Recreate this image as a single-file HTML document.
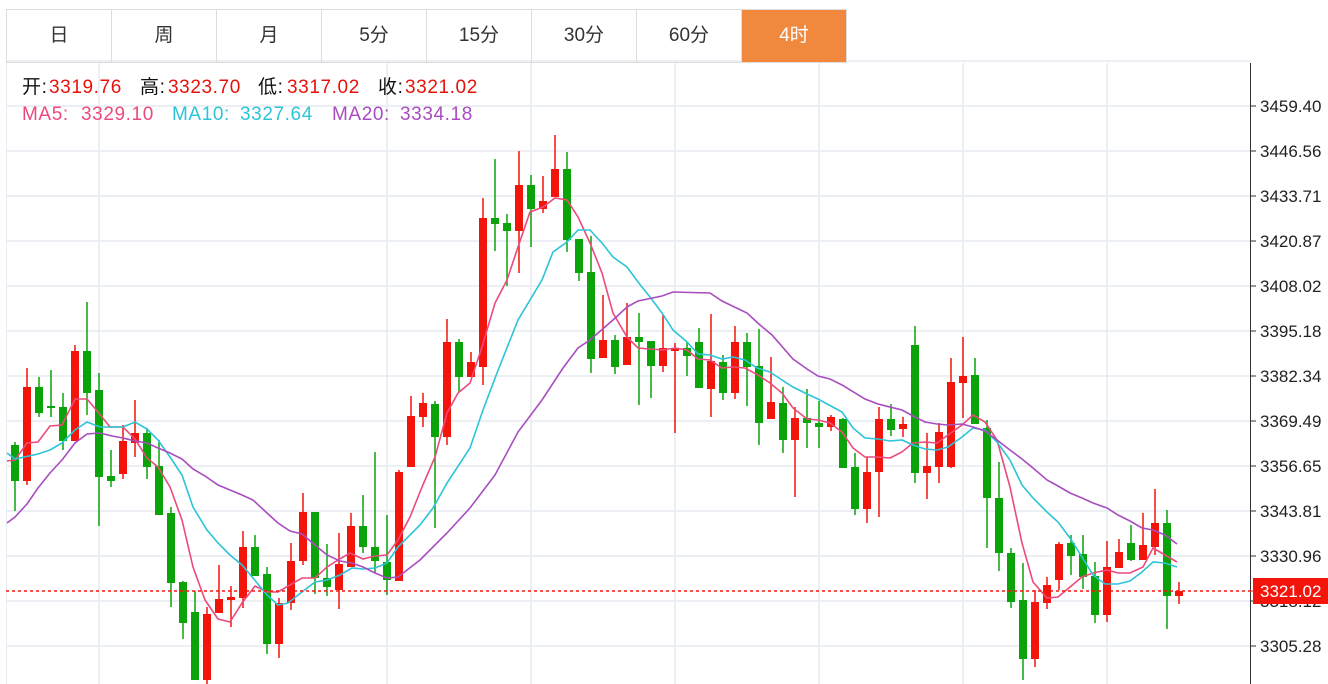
<!DOCTYPE html>
<html><head><meta charset="utf-8">
<style>
body{margin:0;width:1328px;height:684px;overflow:hidden;background:#fff;font-family:"Liberation Sans","Noto Sans CJK SC",sans-serif;}
.tabs{position:absolute;left:6px;top:9px;height:54px;display:flex;border:1px solid #ddd;border-right:none;box-sizing:border-box}
.tabs div{width:105px;height:52px;line-height:52px;text-align:center;font-size:19px;color:#333;border-right:1px solid #ddd;box-sizing:border-box}
.tabs div.on{background:#f0883e;color:#fff}
.t{position:absolute;font-size:19px;line-height:22px;height:22px;white-space:nowrap;letter-spacing:0.6px}
.r{color:#e8110a}
svg{position:absolute;left:0;top:0}
</style></head><body>
<svg id="s" width="1328" height="684"></svg>
<div class="tabs"><div>日</div><div>周</div><div>月</div><div>5分</div><div>15分</div><div>30分</div><div>60分</div><div class="on">4时</div></div>
<div class="t" style="left:22px;top:77px;color:#111">开:</div><div class="t r" style="left:49px;top:77px">3319.76</div>
<div class="t" style="left:140px;top:77px;color:#111">高:</div><div class="t r" style="left:168px;top:77px">3323.70</div>
<div class="t" style="left:258px;top:77px;color:#111">低:</div><div class="t r" style="left:287px;top:77px">3317.02</div>
<div class="t" style="left:378px;top:77px;color:#111">收:</div><div class="t r" style="left:405px;top:77px">3321.02</div>
<div class="t" style="left:22px;top:104px;color:#ec4a7d">MA5:</div><div class="t" style="left:81px;top:104px;color:#ec4a7d">3329.10</div>
<div class="t" style="left:172px;top:104px;color:#2cc4d8">MA10:</div><div class="t" style="left:240px;top:104px;color:#2cc4d8">3327.64</div>
<div class="t" style="left:332px;top:104px;color:#a94cc0">MA20:</div><div class="t" style="left:400px;top:104px;color:#a94cc0">3334.18</div>
<script>
var h='';
for(var k=-1;k<=12;k++){var y=106+45*k;h+='<line x1="6" x2="1250" y1="'+y+'" y2="'+y+'" stroke="#e6ecf2" stroke-width="1.5"/>';}
[99,387,531,675,819,963,1107].forEach(function(x){h+='<line x1="'+x+'" x2="'+x+'" y1="63" y2="684" stroke="#e6ecf2" stroke-width="1.5"/>';});
h+='<line x1="6.5" x2="6.5" y1="63" y2="684" stroke="#e6ecf2"/>';
var C=[
['g',445,481,442,511],['r',387,481,368,485],['g',387,413,377,417],['g',406,408,370,417],['g',407,441,393,450],['r',351,441,345,441],['g',351,393,302,415],['g',390,477,373,526],['g',476,481,450,487],['r',441,474,425,479],['r',433,443,400,457],['g',433,467,428,479],['g',466,515,440,515],['g',513,583,507,607],['g',582,623,581,639],['g',612,680,591,680],['r',614,680,607,684],['r',599,613,565,613],['r',597,600,586,627],['r',547,598,531,608],['g',547,576,535,576],['g',574,644,567,654],['r',603,644,598,658],['r',561,603,543,610],['r',512,561,493,565],['g',512,578,512,594],['g',578,587,544,596],['r',564,590,533,609],['r',526,567,513,567],['g',526,547,495,553],['g',547,561,452,573],['g',562,580,515,595],['r',472,581,470,581],['r',416,467,396,467],
['r',403,417,393,427],['g',404,437,401,528],['r',342,437,319,445],['g',342,377,339,392],['r',362,377,352,377],['r',218,367,198,385],['g',218,224,159,251],['g',223,231,214,286],['r',185,231,151,273],['g',185,209,175,247],['r',201,209,176,213],['r',169,197,135,197],['g',169,240,152,252],['g',239,273,239,281],['g',272,359,236,373],['r',340,358,295,358],['g',340,367,335,374],['r',337,365,303,365],['g',337,342,313,405],['g',341,366,341,398],['r',348,366,315,372],['r',348,351,343,433],['g',348,356,342,376],['g',342,388,328,388],['r',361,389,314,417],['g',362,393,355,400],['r',342,393,326,399],['g',342,367,333,406],['g',366,423,329,445],['r',402,419,357,419],['g',403,440,387,453],['r',418,440,407,497],['g',418,423,389,448],
['g',423,427,401,448],['r',417,427,415,431],['g',419,468,418,468],['g',467,509,453,515],['r',472,509,457,523],['r',419,472,407,517],['g',419,430,404,436],['r',424,429,417,437],['g',345,473,326,483],['r',466,473,433,499],['r',432,467,423,483],['r',382,467,358,468],['r',376,383,337,418],['g',375,424,358,424],['g',428,498,420,548],['g',498,553,462,571],['g',553,602,548,608],['g',600,659,563,680],['r',602,659,590,667],['r',585,603,577,609],['r',544,580,542,590],['g',543,556,535,575],['g',554,577,535,589],['g',576,615,562,623],['r',567,615,541,622],['r',552,568,539,568],['g',543,560,525,561],['r',545,560,513,560],['r',523,547,489,555],['g',523,596,510,629],['r',591,596,582,604]];
C.forEach(function(c,i){var x=15+12*i,col=c[0]=='g'?'#0aa30a':'#f3140b';
h+='<line x1="'+x+'" x2="'+x+'" y1="'+c[3]+'" y2="'+c[4]+'" stroke="'+col+'" stroke-width="1.5"/>';
var bh=Math.max(2,c[2]-c[1]);h+='<rect x="'+(x-4)+'" y="'+c[1]+'" width="8" height="'+bh+'" fill="'+col+'"/>';});
function pl(p,col){h+='<polyline fill="none" stroke="'+col+'" stroke-width="1.6" points="'+p+'"/>';}
pl('7,461 15,460 27,443 38,442 50,426 62,425 75,399 87,399 98,412 110,427 123,427 135,439 147,458 158,467 170,487 182,520 193,567 205,600 218,619 230,622 242,603 255,586 267,592 278,592 290,585 302,578 315,578 327,567 338,560 350,553 363,559 375,556 387,555 398,540 410,517 422,487 435,457 447,413 458,393 470,383 482,347 495,303 507,280 518,247 530,212 543,207 555,198 567,200 578,217 590,243 602,273 613,313 627,337 638,348 650,349 663,350 675,348 687,350 698,359 710,360 722,368 733,367 745,368 758,375 770,383 782,393 793,408 807,419 818,420 830,423 842,432 853,448 865,457 878,457 890,458 902,452 913,443 925,442 937,443 948,435 962,425 973,415 985,422 997,440 1010,487 1022,543 1033,582 1047,598 1058,597 1070,587 1082,577 1093,573 1107,570 1118,573 1130,573 1143,567 1153,548 1165,555 1177,562','#ec4a7d');
pl('7,453 15,459 38,454 50,450 62,443 75,430 87,422 100,427 112,427 123,427 135,422 147,429 158,440 170,457 182,475 193,507 207,530 218,543 230,555 242,565 253,578 267,595 278,605 288,603 302,592 315,582 327,580 340,575 352,568 363,569 375,568 387,563 398,547 420,525 433,508 447,483 470,448 483,410 497,373 518,320 542,280 553,252 567,242 578,230 590,230 602,243 613,257 627,267 638,282 650,297 662,313 673,330 687,342 698,354 710,355 722,359 733,357 745,360 757,368 770,372 782,380 793,387 807,394 818,399 842,412 853,428 865,438 878,439 890,441 902,440 913,445 925,449 937,450 948,447 962,437 973,428 985,430 997,442 1010,460 1022,485 1033,498 1047,512 1058,522 1070,538 1082,557 1093,575 1105,584 1118,584 1130,581 1142,572 1153,562 1165,563 1177,567','#2cc4d8');
pl('7,523 15,517 27,504 38,488 50,473 62,460 75,443 87,434 100,433 112,436 123,438 135,441 147,443 158,448 170,453 182,459 193,469 205,476 218,485 230,490 242,495 253,500 267,513 278,523 290,531 302,534 315,545 327,555 340,561 352,563 363,567 375,573 387,578 398,577 420,560 447,533 470,508 495,475 518,432 542,400 563,368 578,348 590,340 613,320 627,307 638,301 662,296 673,292 710,293 722,301 747,313 760,325 772,335 793,359 807,369 818,376 830,379 842,385 865,399 878,404 902,410 913,416 925,422 937,424 948,425 962,424 973,427 985,431 997,440 1010,450 1022,459 1033,468 1047,480 1058,486 1070,493 1082,498 1093,503 1107,508 1118,515 1130,521 1142,528 1153,530 1165,535 1177,544','#a94cc0');
h+='<line x1="6" x2="1250" y1="591" y2="591" stroke="#f3140b" stroke-width="1.5" stroke-dasharray="3,3"/>';
h+='<line x1="1250.5" x2="1250.5" y1="63" y2="684" stroke="#333"/>';
var L=['3459.40','3446.56','3433.71','3420.87','3408.02','3395.18','3382.34','3369.49','3356.65','3343.81','3330.96','3318.12','3305.28'];
L.forEach(function(t,k){var y=106+45*k;h+='<line x1="1250" x2="1256" y1="'+y+'" y2="'+y+'" stroke="#333"/><text x="1260" y="'+(y+6)+'" font-size="17" fill="#222" font-family="Liberation Sans,sans-serif">'+t+'</text>';});
h+='<line x1="1250" x2="1256" y1="591" y2="591" stroke="#f3140b"/><rect x="1253" y="578" width="75" height="26" fill="#f3140b"/><text x="1260" y="597" font-size="17" fill="#fff" font-family="Liberation Sans,sans-serif">3321.02</text>';
document.getElementById('s').innerHTML=h;
</script>
</body></html>
